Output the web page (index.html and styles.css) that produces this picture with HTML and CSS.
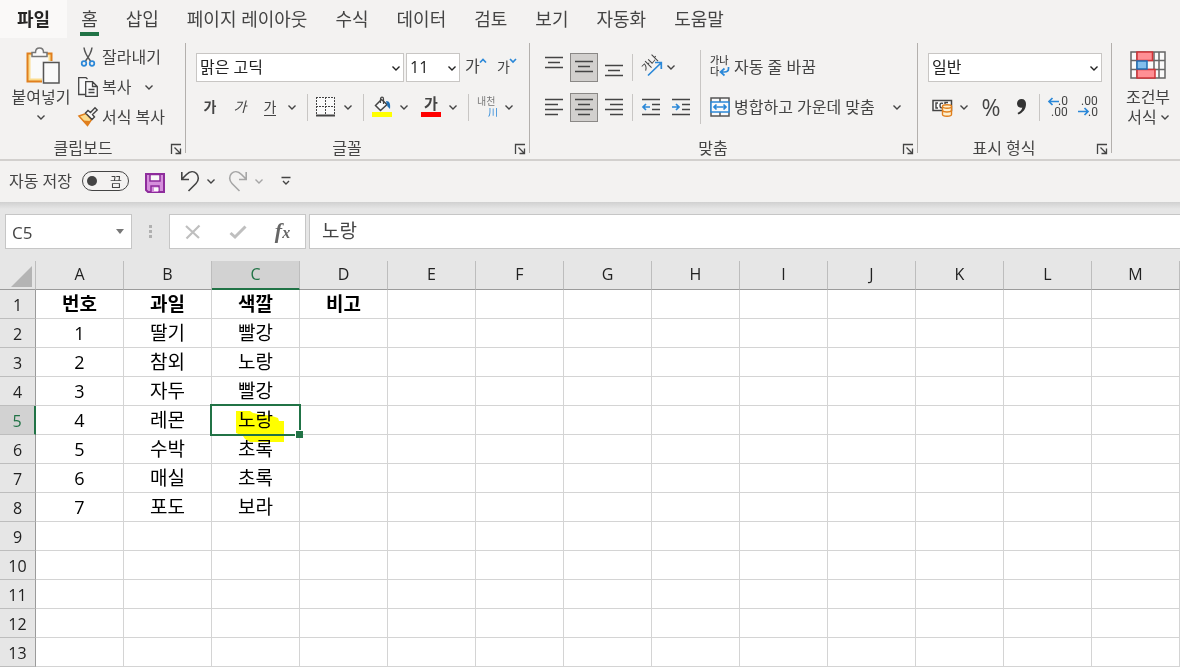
FILE: index.html
```html
<!DOCTYPE html>
<html lang="ko">
<head>
<meta charset="utf-8">
<title>통합 문서</title>
<link rel="stylesheet" href="styles.css">
</head>
<body>
<svg class="defs" aria-hidden="true">
  <symbol id="chev" viewBox="0 0 8 8"><path d="M0.500 2.500 4 6 7.500 2.500" fill="none" stroke="currentColor" stroke-width="1.4"/></symbol>
  <symbol id="launch" viewBox="0 0 12 12"><path d="M1.5 11V1.5H11M4.500 4.500 10 10M10.500 5.500V10.500H5.500" fill="none" stroke="#444" stroke-width="1.300"/></symbol>
</svg>

<nav class="tabs">
  <a class="tab file" href="#file">파일</a>
  <a class="tab active" href="#home">홈</a>
  <a class="tab" href="#insert">삽입</a>
  <a class="tab" href="#layout">페이지 레이아웃</a>
  <a class="tab" href="#formulas">수식</a>
  <a class="tab" href="#data">데이터</a>
  <a class="tab" href="#review">검토</a>
  <a class="tab" href="#view">보기</a>
  <a class="tab" href="#automate">자동화</a>
  <a class="tab" href="#help">도움말</a>
</nav>

<div class="ribbon">
  <section class="group clipboard">
    <div class="body">
      <button class="big paste">
        <svg width="36" height="38" viewBox="-2 0 36 38">
          <path d="M2.500 6.500H26.500V34.500H2.500Z" fill="#fbdc8e" stroke="#e07f1d" stroke-width="2"/>
          <path d="M5.500 8.500H23.500V31.500H5.500Z" fill="#fafafa"/>
          <path d="M7 9.500V5.500H10.500C10.500 2.500 12 1 14.500 1S18.500 2.500 18.500 5.500H22V9.500Z" fill="#fafafa" stroke="#777" stroke-width="1.500"/>
          <path d="M17 14H35V37H17Z" fill="#f3f2f1"/>
          <path d="M18.500 15.500H34V36H18.500Z" fill="#fafafa" stroke="#555" stroke-width="1.500"/>
        </svg>
        <span>붙여넣기</span>
        <svg class="chev" viewBox="0 0 8 8"><use href="#chev"/></svg>
      </button>
      <div class="stack">
        <button class="line">
          <svg width="20" height="20" viewBox="0 0 20 20" fill="none"><path d="M6 0.500C6.500 5 9.500 10 12.500 14M14 0.500C13.500 5 10.500 10 7.500 14" stroke="#555" stroke-width="1.500"/><circle cx="6" cy="16.500" r="2.300" stroke="#2b88d8" stroke-width="1.700"/><circle cx="14" cy="16.500" r="2.300" stroke="#2b88d8" stroke-width="1.700"/></svg>
          <span>잘라내기</span>
        </button>
        <button class="line">
          <svg width="20" height="20" viewBox="0 0 20 20" fill="#fafafa" stroke="#444" stroke-width="1.300"><path d="M7 17.500H0.700V0.700H8L9.500 2"/><path d="M7.700 4.700H14.500L19.300 9.500V19.300H7.700ZM14.500 4.700V9.500H19.300M10.500 12.500H16.500M10.500 15.500H16.500"/></svg>
          <span>복사</span>
          <svg class="chev copychev" viewBox="0 0 8 8"><use href="#chev"/></svg>
        </button>
        <button class="line">
          <svg width="20" height="20" viewBox="0 0 20 20"><path d="M1 9 8 6.500 13.500 12.500 9.500 18.500Z" fill="#fbdc8e" stroke="#e07f1d" stroke-width="1.500"/><path d="M4.500 13.500 12.500 14 9.500 18.500Z" fill="#e07f1d"/><path d="M7.500 6 10 3.500 12.500 5.500 17 0.800 19.200 3 14.500 7.500 16.500 10 14 12.500Z" fill="#fafafa" stroke="#444" stroke-width="1.400"/></svg>
          <span>서식 복사</span>
        </button>
      </div>
    </div>
    <div class="caption"><span>클립보드</span><button class="launcher" aria-label="클립보드 옵션"><svg width="12" height="12"><use href="#launch"/></svg></button></div>
  </section>

  <section class="group font">
    <div class="body rows">
      <div class="row">
        <span class="pick fontname"><select aria-label="글꼴"><option>맑은 고딕</option></select><svg class="chev" viewBox="0 0 8 8"><use href="#chev"/></svg></span>
        <span class="pick fontsize"><select aria-label="글꼴 크기"><option>11</option></select><svg class="chev" viewBox="0 0 8 8"><use href="#chev"/></svg></span>
        <button class="ic" aria-label="글꼴 크기 크게"><svg width="22" height="20" viewBox="0 0 22 20"><text x="0" y="15" class="k16">가</text><path d="M15 5.500 18 2.500 21 5.500" class="blue"/></svg></button>
        <button class="ic" aria-label="글꼴 크기 작게"><svg width="22" height="20" viewBox="0 0 22 20"><text x="2" y="15" class="k13">가</text><path d="M15 2 18 5 21 2" class="blue"/></svg></button>
      </div>
      <div class="row">
        <button class="ic glyph bold">가</button>
        <button class="ic glyph italic">가</button>
        <button class="ic glyph under"><span>가</span></button>
        <button class="dd" aria-label="밑줄 옵션"><svg class="chev" viewBox="0 0 8 8"><use href="#chev"/></svg></button>
        <i class="sep"></i>
        <button class="ic" aria-label="테두리"><svg width="20" height="20" viewBox="0 0 20 20" fill="none" stroke="#444"><path d="M0 0H18V18H0Z" fill="#fafafa" stroke="none"/><path d="M0 0.500H19M0 9.500H19M0.500 0V18M9.500 0V18M18.500 0V18" stroke-dasharray="2 1"/><path d="M0 18.500H19" stroke-width="2"/></svg></button>
        <button class="dd" aria-label="테두리 옵션"><svg class="chev" viewBox="0 0 8 8"><use href="#chev"/></svg></button>
        <i class="sep"></i>
        <button class="ic" aria-label="채우기 색"><svg width="20" height="20" viewBox="0 0 20 20"><path d="M3.500 8.500 9.500 2.500 15 7.500 8.500 13.500Z" fill="#fafafa" stroke="#444" stroke-width="1.500"/><path d="M8.500 6V2C8.500 -0.500 11.500 -0.500 11.500 2V7" fill="none" stroke="#444" stroke-width="1.200"/><path d="M14 4C18 4 18.500 7.500 18 12L15.500 9.500Z" fill="#1f6fb5"/><path d="M0 15H20V20H0Z" fill="#ff0"/></svg></button>
        <button class="dd" aria-label="채우기 색 옵션"><svg class="chev" viewBox="0 0 8 8"><use href="#chev"/></svg></button>
        <button class="ic gap" aria-label="글꼴 색"><svg width="20" height="20" viewBox="0 0 20 20"><text x="3" y="12" class="k15 heavy">가</text><path d="M0 15H20V20H0Z" fill="#f00"/></svg></button>
        <button class="dd" aria-label="글꼴 색 옵션"><svg class="chev" viewBox="0 0 8 8"><use href="#chev"/></svg></button>
        <i class="sep"></i>
        <button class="ic" aria-label="윗주 필드"><svg width="22" height="22" viewBox="0 0 22 22"><text x="1" y="9" class="k10 dim">내천</text><text x="12" y="20" class="k10 hanja">川</text></svg></button>
        <button class="dd" aria-label="윗주 옵션"><svg class="chev" viewBox="0 0 8 8"><use href="#chev"/></svg></button>
      </div>
    </div>
    <div class="caption"><span>글꼴</span><button class="launcher" aria-label="글꼴 옵션"><svg width="12" height="12"><use href="#launch"/></svg></button></div>
  </section>

  <section class="group align">
    <div class="body">
      <div class="rows">
        <div class="row">
          <button class="ic" aria-label="위쪽 맞춤"><svg width="20" height="20" class="lines"><path d="M1 0.500H19M4 5.500H16M1 10.500H19"/></svg></button>
          <button class="ic on" aria-label="가운데 맞춤"><svg width="20" height="20" class="lines"><path d="M1 4.500H19M4 9.500H16M1 14.500H19"/></svg></button>
          <button class="ic" aria-label="아래쪽 맞춤"><svg width="20" height="20" class="lines"><path d="M1 8.500H19M4 13.500H16M1 18.500H19"/></svg></button>
          <i class="sep"></i>
          <button class="ic orient" aria-label="방향"><svg width="20" height="20" viewBox="0 0 20 20"><text x="0" y="0" class="k10 mid" transform="translate(4 15) rotate(-45)">가나</text><path d="M6 18.500 19 6M13 5.500H19.300V12" class="blue"/></svg><svg class="chev" viewBox="0 0 8 8"><use href="#chev"/></svg></button>
        </div>
        <div class="row">
          <button class="ic" aria-label="왼쪽 맞춤"><svg width="20" height="20" class="lines"><path d="M1 2.500H19M1 7.500H14M1 12.500H19M1 17.500H14"/></svg></button>
          <button class="ic on" aria-label="가운데"><svg width="20" height="20" class="lines"><path d="M1 2.500H19M4 7.500H16M1 12.500H19M4 17.500H16"/></svg></button>
          <button class="ic" aria-label="오른쪽 맞춤"><svg width="20" height="20" class="lines"><path d="M1 2.500H19M6 7.500H19M1 12.500H19M6 17.500H19"/></svg></button>
          <i class="sep"></i>
          <button class="ic" aria-label="내어쓰기"><svg width="20" height="20" class="lines"><path d="M1 2.500H19M11 7.500H19M11 12.500H19M1 17.500H19"/><path d="M9 10H2M5 7 2 10 5 13" class="blue"/></svg></button>
          <button class="ic" aria-label="들여쓰기"><svg width="20" height="20" class="lines"><path d="M1 2.500H19M11 7.500H19M11 12.500H19M1 17.500H19"/><path d="M1 10H8M5 7 8 10 5 13" class="blue"/></svg></button>
        </div>
      </div>
      <i class="sep tall"></i>
      <div class="rows">
        <div class="row">
          <button class="line"><svg width="20" height="20" viewBox="0 0 20 20"><text x="0" y="7" class="k10 mid">가나</text><text x="0" y="18" class="k10 mid">다</text><path d="M18.500 10V11.500C18.500 14 17 15 14.500 15H11M14.500 11.500 10.500 15 14.500 18.500" class="blue"/></svg><span>자동 줄 바꿈</span></button>
        </div>
        <div class="row">
          <button class="line"><svg width="20" height="20" viewBox="0 0 20 20" fill="none"><path d="M1 1H19V19H1ZM10 1V5M10 15V19" fill="#fafafa" stroke="#555" stroke-width="1.500"/><path d="M1 5H19V15H1Z" fill="#fafafa" stroke="#2b88d8" stroke-width="1.500"/><path d="M4 10H16M6.500 7.500 4 10 6.500 12.500M13.500 7.500 16 10 13.500 12.500" class="blue"/></svg><span>병합하고 가운데 맞춤</span></button>
          <button class="dd merge" aria-label="병합 옵션"><svg class="chev" viewBox="0 0 8 8"><use href="#chev"/></svg></button>
        </div>
      </div>
    </div>
    <div class="caption"><span>맞춤</span><button class="launcher" aria-label="맞춤 옵션"><svg width="12" height="12"><use href="#launch"/></svg></button></div>
  </section>

  <section class="group number">
    <div class="body rows">
      <div class="row">
        <span class="pick format"><select aria-label="표시 형식"><option>일반</option></select><svg class="chev" viewBox="0 0 8 8"><use href="#chev"/></svg></span>
      </div>
      <div class="row">
        <button class="ic" aria-label="회계 표시 형식"><svg width="20" height="20" viewBox="0 0 20 20" fill="none"><path d="M1 3.500H19.500V13.500H1Z" fill="#fafafa" stroke="#444" stroke-width="1.500"/><path d="M6 6H4V11H6M11 6.500C9 5.500 8 6.500 8 8.500S9 11.500 11 10.500M13 7V5.500H16" stroke="#444" stroke-width="1.400"/><path d="M10.500 9.500V17.500C10.500 19.800 19.500 19.800 19.500 17.500V9.500" fill="#fdf0d0" stroke="#e07f1d" stroke-width="1.400"/><ellipse cx="15" cy="9.500" rx="4.500" ry="1.700" fill="#fdf0d0" stroke="#e07f1d" stroke-width="1.400"/><path d="M10.500 13.500C11.500 15.500 18.500 15.500 19.500 13.500" stroke="#e07f1d" stroke-width="1.400"/></svg></button>
        <button class="dd" aria-label="회계 옵션"><svg class="chev" viewBox="0 0 8 8"><use href="#chev"/></svg></button>
        <button class="ic gap percent">%</button>
        <button class="ic" aria-label="쉼표 스타일"><svg width="20" height="20" viewBox="0 0 20 20"><path d="M10.500 2C13.500 2 15 4 15 7 15 12 12 15.500 7.500 17.500L6.500 16C9.500 14.500 11 12.500 11.300 10.500 8 11.500 6 9 6 6.500 6 4 8 2 10.500 2Z" fill="#333"/></svg></button>
        <i class="sep"></i>
        <button class="ic" aria-label="자릿수 늘림"><svg width="22" height="22" viewBox="0 0 22 22"><path d="M12 5.500H2M5.500 2 2 5.500 5.500 9" class="blue"/><text x="11" y="9" class="num">.0</text><text x="4" y="20" class="num">.00</text></svg></button>
        <button class="ic" aria-label="자릿수 줄임"><svg width="22" height="22" viewBox="0 0 22 22"><text x="4" y="9" class="num">.00</text><path d="M1 15.500H11M7.500 12 11 15.500 7.500 19" class="blue"/><text x="11" y="20" class="num">.0</text></svg></button>
      </div>
    </div>
    <div class="caption"><span>표시 형식</span><button class="launcher" aria-label="표시 형식 옵션"><svg width="12" height="12"><use href="#launch"/></svg></button></div>
  </section>

  <section class="group styles">
    <div class="body">
      <button class="big cond">
        <svg width="36" height="30" viewBox="0 0 36 30"><path d="M1 2H35V28H1ZM1 10.500H35M1 19.500H35M7 2V28M24 2V28M29 2V28" fill="#fafafa" stroke="#666" stroke-width="1.500"/><path d="M7 2H22.500V10.500H7ZM7 19.500H25V28H7Z" fill="#ff8f94" stroke="#d13438" stroke-width="1.500"/><path d="M7 11H17V19H7Z" fill="#83beec" stroke="#1f6fb5" stroke-width="1.500"/></svg>
        <span>조건부</span>
        <span class="with">서식 <svg class="chev" viewBox="0 0 8 8"><use href="#chev"/></svg></span>
      </button>
    </div>
  </section>
</div>

<div class="quick">
  <label class="autosave"><span>자동 저장</span><span class="switch"><input type="checkbox"><span class="state">끔</span></span></label>
  <button class="q save" aria-label="저장"><svg width="20" height="20" viewBox="0 0 20 20"><path d="M1 1H19V19H3L1 17Z" fill="#d58fdc" stroke="#8e2d9c" stroke-width="2"/><path d="M5 1.500H15V8H5Z" fill="#fafafa" stroke="#8e2d9c" stroke-width="1.500"/><path d="M6 19V13H14V19" fill="#d58fdc" stroke="#8e2d9c" stroke-width="1.500"/><path d="M9 14.500H13.500V18H9Z" fill="#fafafa"/></svg></button>
  <button class="q undo" aria-label="실행 취소"><svg width="20" height="21" viewBox="0 0 20 21"><path d="M1.800 1V8.500H9M2 8 6.500 3.500C10 0 14 0 16.500 2.500S19 9.500 16 12.500L8.500 20" fill="none" stroke="currentColor" stroke-width="1.600"/></svg></button>
  <button class="dd" aria-label="실행 취소 목록"><svg class="chev" viewBox="0 0 8 8"><use href="#chev"/></svg></button>
  <button class="q redo" aria-label="다시 실행" disabled><svg width="20" height="21" viewBox="0 0 20 21"><path d="M18.200 1V8.500H11M18 8 13.500 3.500C10 0 6 0 3.500 2.500S1 9.500 4 12.500L11.500 20" fill="none" stroke="currentColor" stroke-width="1.600"/></svg></button>
  <button class="dd faint" aria-label="다시 실행 목록" disabled><svg class="chev" viewBox="0 0 8 8"><use href="#chev"/></svg></button>
  <button class="q custom" aria-label="빠른 실행 도구 모음 사용자 지정"><svg width="10" height="10" viewBox="0 0 10 10"><path d="M0.500 1.500H9.500M2 5 5 8 8 5" fill="none" stroke="#444" stroke-width="1.400"/></svg></button>
</div>

<div class="formulabar">
  <div class="namebox"><input aria-label="이름 상자" value="C5"><button aria-label="이름 목록"><svg width="8" height="5"><path d="M0 0H8L4 5Z" fill="#777"/></svg></button></div>
  <svg class="dots" width="3" height="14"><path d="M0 0H3V3H0ZM0 5H3V8H0ZM0 10H3V13H0Z" fill="#b0b0b0"/></svg>
  <div class="actions">
    <button aria-label="취소"><svg width="18" height="18" viewBox="0 0 18 18"><path d="M2 3 15 15M15.500 2.500 2.500 15.500" fill="none" stroke="#bfbfbf" stroke-width="2.200"/></svg></button>
    <button aria-label="입력"><svg width="18" height="18" viewBox="0 0 18 18"><path d="M1.500 10 6 14 16.500 3.500" fill="none" stroke="#bfbfbf" stroke-width="3"/></svg></button>
    <button class="fx" aria-label="함수 삽입"><span class="f">f</span><span class="x">x</span></button>
  </div>
  <input class="formula" aria-label="수식 입력줄" value="노랑">
</div>

<table class="sheet">
  <colgroup><col class="rowcol"><col span="13"></colgroup>
  <thead>
    <tr><th class="corner"><svg width="21" height="21"><path d="M21 0V21H0Z" fill="#b4b4b4"/></svg></th><th>A</th><th>B</th><th class="cur">C</th><th>D</th><th>E</th><th>F</th><th>G</th><th>H</th><th>I</th><th>J</th><th>K</th><th>L</th><th>M</th></tr>
  </thead>
  <tbody>
    <tr class="head"><th>1</th><td>번호</td><td>과일</td><td>색깔</td><td>비고</td><td></td><td></td><td></td><td></td><td></td><td></td><td></td><td></td><td></td></tr>
    <tr><th>2</th><td>1</td><td>딸기</td><td>빨강</td><td></td><td></td><td></td><td></td><td></td><td></td><td></td><td></td><td></td><td></td></tr>
    <tr><th>3</th><td>2</td><td>참외</td><td>노랑</td><td></td><td></td><td></td><td></td><td></td><td></td><td></td><td></td><td></td><td></td></tr>
    <tr><th>4</th><td>3</td><td>자두</td><td>빨강</td><td></td><td></td><td></td><td></td><td></td><td></td><td></td><td></td><td></td><td></td></tr>
    <tr><th class="cur">5</th><td>4</td><td>레몬</td><td class="selected">노랑<svg class="marker" width="48" height="31" viewBox="0 0 48 31"><path d="M0 0H14L17 2 36 5 42 7 43 10H48V31H14L9 28 7 25 0 22Z" fill="#ff0"/></svg><i class="frame"></i></td><td></td><td></td><td></td><td></td><td></td><td></td><td></td><td></td><td></td><td></td></tr>
    <tr><th>6</th><td>5</td><td>수박</td><td>초록</td><td></td><td></td><td></td><td></td><td></td><td></td><td></td><td></td><td></td><td></td></tr>
    <tr><th>7</th><td>6</td><td>매실</td><td>초록</td><td></td><td></td><td></td><td></td><td></td><td></td><td></td><td></td><td></td><td></td></tr>
    <tr><th>8</th><td>7</td><td>포도</td><td>보라</td><td></td><td></td><td></td><td></td><td></td><td></td><td></td><td></td><td></td><td></td></tr>
    <tr><th>9</th><td></td><td></td><td></td><td></td><td></td><td></td><td></td><td></td><td></td><td></td><td></td><td></td><td></td></tr>
    <tr><th>10</th><td></td><td></td><td></td><td></td><td></td><td></td><td></td><td></td><td></td><td></td><td></td><td></td><td></td></tr>
    <tr><th>11</th><td></td><td></td><td></td><td></td><td></td><td></td><td></td><td></td><td></td><td></td><td></td><td></td><td></td></tr>
    <tr><th>12</th><td></td><td></td><td></td><td></td><td></td><td></td><td></td><td></td><td></td><td></td><td></td><td></td><td></td></tr>
    <tr><th>13</th><td></td><td></td><td></td><td></td><td></td><td></td><td></td><td></td><td></td><td></td><td></td><td></td><td></td></tr>
  </tbody>
</table>
</body>
</html>
```

FILE: styles.css
```css
* { box-sizing: border-box; }

body {
  margin: 0;
  background: #fff;
  color: #444;
  font: 16px/20px "Open Sans", "Noto Sans CJK KR", sans-serif;
}

button, input, select { font: inherit; color: inherit; margin: 0; padding: 0; }
button { border: 0; background: none; }
svg { display: block; flex: none; overflow: visible; }
.defs { position: absolute; width: 0; height: 0; }
.chev { width: 8px; height: 8px; }

.blue { fill: none; stroke: #2b88d8; stroke-width: 1.7px; }
.lines { fill: none; stroke: #444; stroke-width: 1.5px; }
text { fill: #444; font-family: "Noto Sans CJK KR", sans-serif; }
.k10 { font-size: 10px; }
.k13 { font-size: 14px; }
.k15 { font-size: 15px; }
.k16 { font-size: 16px; }
.mid { font-weight: 500; }
.heavy { font-weight: bold; }
.dim { fill: #777; }
.hanja { fill: #2b88d8; }
.num { font-family: Roboto, sans-serif; font-size: 12px; }

/* Tabs */
.tabs {
  display: flex;
  height: 38px;
  background: #f3f2f1;
  font-size: 18px;
}
.tab {
  display: flex;
  align-items: center;
  padding: 0 14px;
  color: #444;
  text-decoration: none;
  position: relative;
  white-space: nowrap;
}
.file { background: #faf9f8; padding: 0 17px; font-weight: bold; color: #252423; }
.active::after {
  content: "";
  position: absolute;
  left: 13px;
  right: 13px;
  bottom: 2px;
  height: 4px;
  background: #217346;
}

/* Ribbon */
.ribbon {
  display: flex;
  background: #f3f2f1;
  border-bottom: 2px solid #d2d0ce;
  overflow: hidden;
}
.group { position: relative; flex: none; padding-top: 4px; }
.group:not(.styles)::after {
  content: "";
  position: absolute;
  right: 0;
  top: 5px;
  bottom: 6px;
  width: 1px;
  background: #b3b0ad;
}
.styles { flex: 1 1 0; min-width: 0; }
.body { display: flex; height: 90px; }
.rows { display: flex; flex-direction: column; justify-content: center; }
.row { display: flex; align-items: center; height: 40px; }
.caption {
  display: flex;
  justify-content: center;
  align-items: center;
  height: 27px;
  padding: 5px 31px 0 0;
  position: relative;
}
.launcher { position: absolute; right: 4px; top: 11px; }

.clipboard { padding-left: 11px; width: 186px; }
.font { padding-left: 9px; width: 344px; }
.align { padding-left: 9px; width: 388px; }
.number { padding-left: 9px; width: 194px; }

.big { display: flex; flex-direction: column; align-items: center; white-space: nowrap; }
.paste { width: 60px; padding-top: 5px; }
.paste span { padding-top: 2px; }
.paste .chev { margin-top: 6px; }
.styles .body { padding-left: 11px; }
.cond { width: 50px; flex: none; padding-top: 8px; }
.big > svg + span { margin-top: 7px; }
.paste > svg + span { margin-top: 0; }
.with { display: flex; align-items: center; gap: 4px; }

.stack { display: flex; flex-direction: column; padding-left: 7px; }
.line { display: flex; align-items: center; gap: 4px; height: 30px; white-space: nowrap; }
.copychev { margin-left: 10px; }

.ic {
  display: flex;
  align-items: center;
  justify-content: center;
  width: 30px;
  height: 30px;
  flex: none;
}
.on {
  width: 28px;
  height: 29px;
  margin: 0 1px;
  background: #d2d0ce;
  border: 1px solid #8a8886;
}
.dd { display: flex; align-items: center; justify-content: center; width: 14px; height: 30px; flex: none; }
.gap { margin-left: 5px; }
.merge { margin-left: 15px; }
.sep { width: 1px; height: 27px; margin: 0 3px 0 8px; background: #c8c6c4; }
.align .sep, .number .sep { margin-left: 3px; }
.align .tall { height: 74px; margin: 8px 9px 0 4px; }
.orient { width: 44px; gap: 5px; }
.glyph { font-size: 14px; }
.bold { font-weight: bold; }
.italic { font-style: italic; }
.under span { line-height: 16px; border-bottom: 1px solid #444; }
.percent { font-size: 23px; }

.pick { position: relative; display: block; height: 29px; background: #fff; color: #222; }
.pick select {
  appearance: none;
  width: 100%;
  height: 29px;
  padding: 0 3px;
  border: 1px solid #c8c6c4;
  border-radius: 0;
  background: #fff;
}
.pick .chev { position: absolute; right: 4px; top: 11px; pointer-events: none; }
.fontname { width: 208px; margin: 0 2px 0 1px; }
.fontsize { width: 54px; margin-right: 1px; }
.format { width: 174px; margin-left: 1px; }

/* Quick access toolbar */
.quick {
  display: flex;
  align-items: center;
  height: 41px;
  padding: 0 0 2px 9px;
  background: #f3f2f1;
}
.autosave { display: flex; align-items: center; gap: 10px; }
.switch { position: relative; display: block; height: 20px; }
.switch input {
  appearance: none;
  display: block;
  width: 47px;
  height: 20px;
  border: 1px solid #444;
  border-radius: 10px;
}
.switch input::before {
  content: "";
  display: block;
  width: 10px;
  height: 10px;
  margin: 4px;
  border-radius: 50%;
  background: #444;
}
.state { position: absolute; right: 7px; top: 0; font-size: 13px; }
.q { display: flex; }
.save { margin: 4px 15px 0 16px; }
.undo, .redo { margin: 2px 4px 0 0; }
.redo { margin-left: 10px; }
.redo, .faint { color: #a6a6a6; }
.custom { margin-left: 15px; }

/* Formula bar */
.formulabar {
  display: flex;
  padding: 12px 0 12px 5px;
  background: linear-gradient(#d0d0d0, #e6e6e6 7px);
}
.namebox, .actions, .formula { height: 35px; background: #fff; border: 1px solid #c6c6c6; }
.namebox { display: flex; align-items: center; width: 127px; }
.namebox input { flex: 1; min-width: 0; border: 0; padding: 2px 0 0 6px; font-size: 17px; background: none; }
.namebox button { padding: 0 7px; }
.dots { margin: 11px 17px 0; }
.actions { display: flex; align-items: center; width: 137px; }
.actions button { display: flex; flex: 1; justify-content: center; align-items: baseline; }
.fx { font-family: "Liberation Serif", serif; font-style: italic; font-weight: bold; color: #666; }
.f { font-size: 22px; }
.x { font-size: 16px; }
.formula { flex: 1; min-width: 0; margin-left: 3px; padding: 0 12px 4px; border-right: 0; border-radius: 0; font-size: 19px; }

/* Sheet */
.sheet {
  width: 100%;
  table-layout: fixed;
  border-spacing: 0;
  color: #000;
}
.rowcol { width: 36px; }
.sheet th, .sheet td {
  height: 29px;
  padding: 0;
  border: solid #d4d4d4;
  border-width: 0 1px 1px 0;
  text-align: center;
  line-height: 24px;
}
.sheet td { font-size: 19px; }
.sheet td:nth-child(2) { font-size: 18px; }
.sheet .head td { font-size: 19px; font-weight: bold; }
.sheet th {
  background: #e6e6e6;
  font-size: 16px;
  font-weight: normal;
  color: #222;
  border-color: #bdbdbd;
}
.sheet thead th { padding-bottom: 2px; border-bottom-color: #9b9b9b; }
.sheet tbody th { padding-top: 2px; border-right-color: #9b9b9b; }
.sheet .corner svg { margin: 4px 0 0 11px; }
.sheet .cur { background: #d2d2d2; color: #217346; }
.sheet thead .cur { border-bottom: 2px solid #217346; }
.sheet tbody .cur { border-right: 2px solid #217346; }
.selected { position: relative; }
.marker { position: absolute; left: 24px; top: 5px; mix-blend-mode: multiply; }
.frame { position: absolute; inset: -2px; border: 2px solid #217346; }
.frame::after {
  content: "";
  position: absolute;
  right: -4px;
  bottom: -4px;
  width: 7px;
  height: 7px;
  background: #217346;
  border: solid #fff;
  border-width: 1px 0 0 1px;
}
```
